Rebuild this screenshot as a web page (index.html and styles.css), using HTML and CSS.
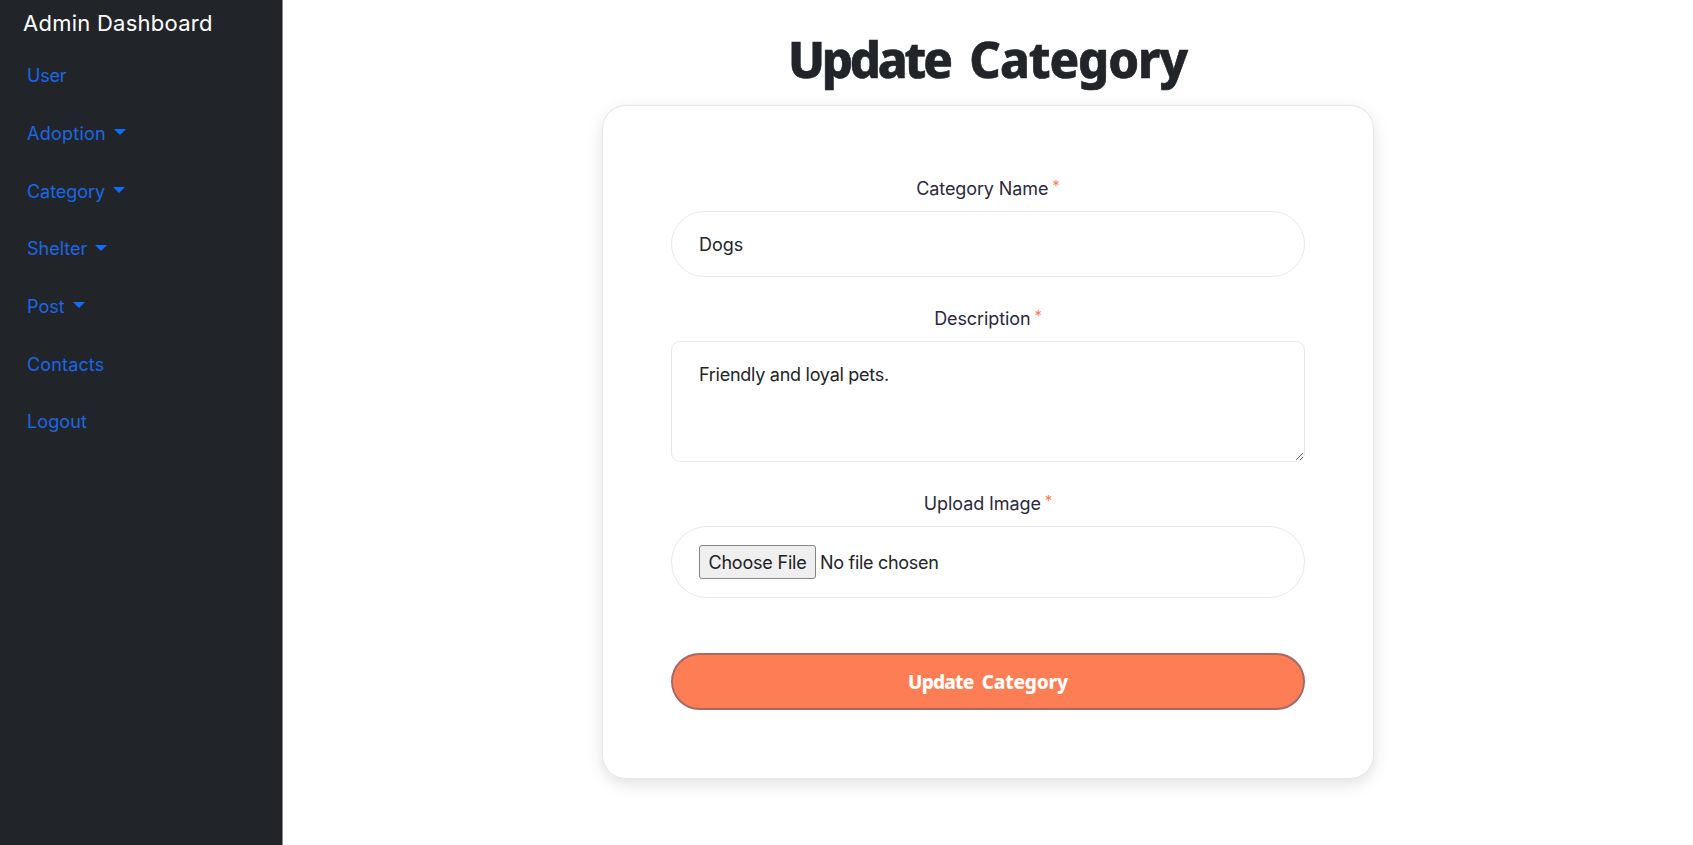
FILE: index.html
```html
<!DOCTYPE html>
<html lang="en">
<head>
<meta charset="utf-8">
<title>Update Category</title>
<link rel="stylesheet" href="styles.css">
</head>
<body>
<div class="layout">
  <aside class="sidebar">
    <div class="brand">Admin Dashboard</div>
    <nav class="nav">
      <a class="nav-link user">User</a>
      <a class="nav-link adoption toggle">Adoption</a>
      <a class="nav-link category toggle">Category</a>
      <a class="nav-link shelter toggle">Shelter</a>
      <a class="nav-link post toggle">Post</a>
      <a class="nav-link contacts">Contacts</a>
      <a class="nav-link logout">Logout</a>
    </nav>
  </aside>
  <main class="main">
    <h1 class="title"><span class="tight">Update</span> Category</h1>
    <form class="card">
      <label class="label" for="name"><span>Category Name</span> <span class="req">*</span></label>
      <input class="field text" id="name" type="text" value="Dogs">
      <label class="label" for="desc"><span>Description</span> <span class="req">*</span></label>
      <textarea class="field area" id="desc" spellcheck="false">Friendly and loyal pets.</textarea>
      <label class="label" for="image"><span>Upload Image</span> <span class="req">*</span></label>
      <input class="field file" id="image" type="file">
      <button class="submit" type="button"><span class="tight">Update</span> Category</button>
    </form>
  </main>
</div>
</body>
</html>
```
FILE: styles.css
```css
* { box-sizing: border-box; }
body {
  margin: 0;
  background: #fff;
  font-family: Inter, "Liberation Sans", sans-serif;
  font-size: 18px;
  color: #212529;
  overflow: hidden;
}
.layout { display: flex; height: 845px; }
.sidebar {
  width: 283px;
  flex: none;
  background: #212529;
  border-right: 1px solid #85878a;
}
.brand {
  padding: 9px 0 0 23px;
  height: 47px;
  line-height: 28px;
  font-size: 22px;
  letter-spacing: 0.25px;
  color: #fff;
}
.nav { display: flex; flex-direction: column; }
.nav-link {
  display: flex;
  align-items: center;
  height: 57.65px;
  padding-left: 27px;
  color: #1d66e5;
}
.user { letter-spacing: -0.2px; }
.adoption { letter-spacing: 0.25px; }
.category { letter-spacing: -0.05px; }
.contacts { letter-spacing: 0.15px; }
.logout { letter-spacing: 0.1px; }
.toggle::after {
  content: "";
  margin: -2px 0 0 8px;
  border-top: 6px solid #0d6efd;
  border-left: 6px solid transparent;
  border-right: 6px solid transparent;
}
.main {
  flex: 1;
  display: flex;
  flex-direction: column;
  align-items: center;
}
.title {
  margin: 0 1px 0 0;
  height: 105px;
  padding-top: 25px;
  line-height: 68px;
  font-family: "Noto Sans", sans-serif;
  font-weight: 800;
  font-size: 49px;
  letter-spacing: -1.1px;
  word-spacing: 8px;
  white-space: nowrap;
  -webkit-text-stroke: 0.6px #212529;
}
.title .tight { letter-spacing: -3.2px; }
.card {
  width: 772px;
  height: 674px;
  padding: 69px 68px 0;
  border: 1px solid #e6e6e6;
  border-radius: 24px;
  background: #fff;
  box-shadow: 0 5px 16px rgba(0, 0, 0, 0.12);
  display: flex;
  flex-direction: column;
}
.label {
  height: 36px;
  line-height: 27px;
  text-align: center;
  color: #2b2840;
  letter-spacing: -0.1px;
  white-space: pre;
}
.req {
  display: inline-block;
  height: 27px;
  margin-left: -1px;
  line-height: 22px;
  vertical-align: top;
  color: #fc7d54;
  font-size: 15px;
}
.field {
  display: block;
  width: 100%;
  margin: 0;
  border: 1px solid #e8e8e8;
  background: #fff;
  color: #212529;
  font: 18px/27px Inter, "Liberation Sans", sans-serif;
  outline: none;
}
.text {
  height: 66px;
  margin-bottom: 28px;
  padding: 0 27px;
  border-radius: 34px;
}
.area {
  height: 121px;
  margin-bottom: 28px;
  padding: 19px 27px;
  border-radius: 9px;
  letter-spacing: -0.27px;
  resize: vertical;
}
.file {
  height: 72px;
  margin-bottom: 55px;
  padding: 18px 27px;
  border-radius: 36px;
  letter-spacing: -0.3px;
}
.file::file-selector-button {
  width: 117px;
  height: 34px;
  padding: 0;
  border: 1px solid #858585;
  border-radius: 3px;
  background: #efefef;
  color: #212121;
  font: 18px/27px Inter, "Liberation Sans", sans-serif;
  letter-spacing: -0.2px;
}
.submit {
  height: 57px;
  border: 2px solid #a8686a;
  border-radius: 29px;
  background: #fd7e54;
  color: #fff;
  font-family: "Noto Sans", sans-serif;
  font-weight: 800;
  font-size: 19px;
  letter-spacing: -0.2px;
  word-spacing: 3.5px;
}
.submit .tight { letter-spacing: -0.8px; }
```
